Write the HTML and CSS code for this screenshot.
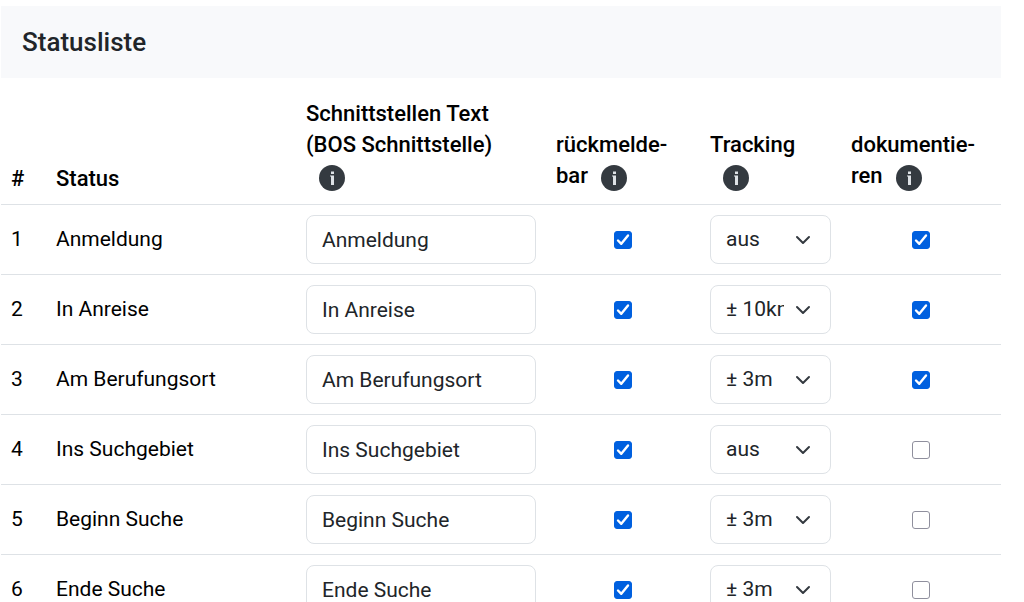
FILE: index.html
```html
<!DOCTYPE html>
<html lang="de">
<head>
  <meta charset="UTF-8" />
  <meta name="viewport" content="width=device-width, initial-scale=1.0"/>
  <title>Statusliste</title>
  <link rel="stylesheet" href="styles.css">
</head>
<body>

  <main class="card">
    <h5 class="card-header">Statusliste</h5>

    <table class="status-table">
      <colgroup>
        <col class="col-nr">
        <col class="col-status">
        <col class="col-text">
        <col class="col-feedback">
        <col class="col-tracking">
        <col class="col-doc">
      </colgroup>
      <thead>
        <tr>
          <th scope="col">#</th>
          <th scope="col">Status</th>
          <th scope="col" id="hText">Schnittstellen Text (BOS&nbsp;Schnittstelle)<button type="button" class="info" aria-label="Info"><svg viewBox="0 0 26 26"><path d="M12 6.5h3v2.5h-3zM11 10.5h4v9.5h-3v-8.5h-1z"/></svg></button></th>
          <th scope="col" id="hFeedback">rückmelde&shy;bar<button type="button" class="info" aria-label="Info"><svg viewBox="0 0 26 26"><path d="M12 6.5h3v2.5h-3zM11 10.5h4v9.5h-3v-8.5h-1z"/></svg></button></th>
          <th scope="col" id="hTracking">Tracking<button type="button" class="info" aria-label="Info"><svg viewBox="0 0 26 26"><path d="M12 6.5h3v2.5h-3zM11 10.5h4v9.5h-3v-8.5h-1z"/></svg></button></th>
          <th scope="col" id="hDoc">dokumentie&shy;ren<button type="button" class="info" aria-label="Info"><svg viewBox="0 0 26 26"><path d="M12 6.5h3v2.5h-3zM11 10.5h4v9.5h-3v-8.5h-1z"/></svg></button></th>
        </tr>
      </thead>
      <tbody>
        <tr>
          <td>1</td>
          <td id="s1">Anmeldung</td>
          <td><input type="text" class="form-control" value="Anmeldung" aria-labelledby="s1 hText"></td>
          <td class="center"><input type="checkbox" class="check" aria-labelledby="s1 hFeedback" checked></td>
          <td><select class="form-select" aria-labelledby="s1 hTracking"><option selected>aus</option><option>± 3m</option><option>± 10km</option></select></td>
          <td class="center"><input type="checkbox" class="check" aria-labelledby="s1 hDoc" checked></td>
        </tr>
        <tr>
          <td>2</td>
          <td id="s2">In Anreise</td>
          <td><input type="text" class="form-control" value="In Anreise" aria-labelledby="s2 hText"></td>
          <td class="center"><input type="checkbox" class="check" aria-labelledby="s2 hFeedback" checked></td>
          <td><select class="form-select" aria-labelledby="s2 hTracking"><option>aus</option><option>± 3m</option><option selected>± 10km</option></select></td>
          <td class="center"><input type="checkbox" class="check" aria-labelledby="s2 hDoc" checked></td>
        </tr>
        <tr>
          <td>3</td>
          <td id="s3">Am Berufungsort</td>
          <td><input type="text" class="form-control" value="Am Berufungsort" aria-labelledby="s3 hText"></td>
          <td class="center"><input type="checkbox" class="check" aria-labelledby="s3 hFeedback" checked></td>
          <td><select class="form-select" aria-labelledby="s3 hTracking"><option>aus</option><option selected>± 3m</option><option>± 10km</option></select></td>
          <td class="center"><input type="checkbox" class="check" aria-labelledby="s3 hDoc" checked></td>
        </tr>
        <tr>
          <td>4</td>
          <td id="s4">Ins Suchgebiet</td>
          <td><input type="text" class="form-control" value="Ins Suchgebiet" aria-labelledby="s4 hText"></td>
          <td class="center"><input type="checkbox" class="check" aria-labelledby="s4 hFeedback" checked></td>
          <td><select class="form-select" aria-labelledby="s4 hTracking"><option selected>aus</option><option>± 3m</option><option>± 10km</option></select></td>
          <td class="center"><input type="checkbox" class="check" aria-labelledby="s4 hDoc"></td>
        </tr>
        <tr>
          <td>5</td>
          <td id="s5">Beginn Suche</td>
          <td><input type="text" class="form-control" value="Beginn Suche" aria-labelledby="s5 hText"></td>
          <td class="center"><input type="checkbox" class="check" aria-labelledby="s5 hFeedback" checked></td>
          <td><select class="form-select" aria-labelledby="s5 hTracking"><option>aus</option><option selected>± 3m</option><option>± 10km</option></select></td>
          <td class="center"><input type="checkbox" class="check" aria-labelledby="s5 hDoc"></td>
        </tr>
        <tr>
          <td>6</td>
          <td id="s6">Ende Suche</td>
          <td><input type="text" class="form-control" value="Ende Suche" aria-labelledby="s6 hText"></td>
          <td class="center"><input type="checkbox" class="check" aria-labelledby="s6 hFeedback" checked></td>
          <td><select class="form-select" aria-labelledby="s6 hTracking"><option>aus</option><option selected>± 3m</option><option>± 10km</option></select></td>
          <td class="center"><input type="checkbox" class="check" aria-labelledby="s6 hDoc"></td>
        </tr>
      </tbody>
    </table>
  </main>

</body>
</html>
```
FILE: styles.css
```css
:root {
  --border: #dee2e6;
  --text: #212529;
  --primary: #0060df;
}

* {
  box-sizing: border-box;
}

html {
  scrollbar-width: none;
}

body {
  margin: 0;
  font-family: Roboto, "Liberation Sans", sans-serif;
  font-size: 21px;
  line-height: 31px;
  color: var(--text);
  background: white;
}

.card {
  margin: 6px 23px 0 1px;
}

.card-header {
  margin: 0 0 10px;
  padding: 20px 21px;
  font-size: 26px;
  font-weight: 500;
  line-height: 32px;
  background: #f8f9fb;
}

.status-table {
  width: 100%;
  table-layout: fixed;
  border-collapse: separate;
  border-spacing: 0;
  color: black;
}

.col-nr {
  width: 4.5%;
}

.col-status,
.col-text {
  width: 25%;
}

.col-feedback {
  width: 15.4%;
}

.col-tracking {
  width: 14.1%;
}

.col-doc {
  width: 16%;
}

.status-table th,
.status-table td {
  padding: 10px;
  border-bottom: 1px solid var(--border);
  text-align: left;
}

.status-table th {
  padding-right: 20px;
  font-size: 22px;
  font-weight: 500;
  vertical-align: bottom;
}

.status-table th:first-child {
  padding-right: 10px;
}

.status-table td {
  vertical-align: middle;
}

.status-table .center {
  text-align: center;
}

/* Info buttons in the table head */
.info {
  width: 26px;
  height: 26px;
  margin: 5px 0 3px 13px;
  padding: 0;
  border: none;
  border-radius: 50%;
  background: #343a40;
  vertical-align: middle;
  cursor: pointer;
}

.info svg {
  display: block;
  width: 26px;
  height: 26px;
  fill: #dee2e6;
}

.form-control,
.form-select {
  display: block;
  width: 100%;
  height: 49px;
  padding: 8px 15px;
  border: 1px solid var(--border);
  border-radius: 8px;
  font: inherit;
  color: var(--text);
  background-color: white;
}

.form-select {
  appearance: none;
  padding-right: 46px;
  background-image: url("data:image/svg+xml,%3Csvg xmlns='http://www.w3.org/2000/svg' viewBox='0 0 16 16'%3E%3Cpath fill='none' stroke='%23343a40' stroke-linecap='round' stroke-linejoin='round' stroke-width='2' d='m2 5 6 6 6-6'/%3E%3C/svg%3E");
  background-repeat: no-repeat;
  background-position: right 19px center;
  background-size: 16px 16px;
}

.check {
  appearance: none;
  display: block;
  width: 18px;
  height: 18px;
  margin: 0 auto;
  border: 1px solid #8f8f9d;
  border-radius: 3px;
  background: white;
}

.check:checked {
  border-color: var(--primary);
  background: var(--primary) url("data:image/svg+xml,%3Csvg xmlns='http://www.w3.org/2000/svg' viewBox='0 0 16 16'%3E%3Cpath fill='none' stroke='white' stroke-linecap='round' stroke-linejoin='round' stroke-width='2.4' d='m3 8.5 3.3 3.3 6.7-8.3'/%3E%3C/svg%3E") center / 16px 16px no-repeat;
}
```
